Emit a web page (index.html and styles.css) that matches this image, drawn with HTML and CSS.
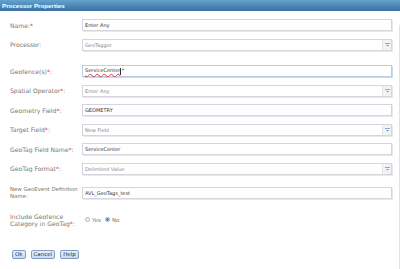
FILE: index.html
```html
<!DOCTYPE html>
<html lang="en">
<head>
    <meta charset="UTF-8">
    <title>Processor Properties</title>
    <link rel="stylesheet" href="styles.css">
</head>
<body>
    <div class="titlebar">Processor Properties</div>
    <div class="dialog-body">
        <div class="form">
            <div class="row">
                <div class="label">Name:<span class="req">*</span></div>
                <div class="box"><span class="value">Enter Any</span></div>
            </div>
            <div class="row">
                <div class="label">Processor:</div>
                <div class="box select">
                    <span class="value muted">GeoTagger</span>
                    <span class="arrow"><svg width="5" height="4" viewBox="0 0 5 4"><rect x="0" y="0" width="5" height="1" fill="#8aa6d6"/><path d="M1 2h3l-1.5 1.5z" fill="#6f8fd0"/></svg></span>
                </div>
            </div>
            <div class="row gap-top">
                <div class="label">Geofence(s)<span class="req">*</span>:</div>
                <div class="box focused"><span class="value"><span class="misspelled">ServiceCenter</span><span class="caret"></span><span class="star">*</span></span></div>
            </div>
            <div class="row">
                <div class="label">Spatial Operator<span class="req">*</span>:</div>
                <div class="box select">
                    <span class="value muted">Enter Any</span>
                    <span class="arrow"><svg width="5" height="4" viewBox="0 0 5 4"><rect x="0" y="0" width="5" height="1" fill="#8aa6d6"/><path d="M1 2h3l-1.5 1.5z" fill="#6f8fd0"/></svg></span>
                </div>
            </div>
            <div class="row">
                <div class="label">Geometry Field<span class="req">*</span>:</div>
                <div class="box"><span class="value">GEOMETRY</span></div>
            </div>
            <div class="row">
                <div class="label">Target Field<span class="req">*</span>:</div>
                <div class="box select">
                    <span class="value muted">New Field</span>
                    <span class="arrow"><svg width="5" height="4" viewBox="0 0 5 4"><rect x="0" y="0" width="5" height="1" fill="#8aa6d6"/><path d="M1 2h3l-1.5 1.5z" fill="#6f8fd0"/></svg></span>
                </div>
            </div>
            <div class="row">
                <div class="label">GeoTag Field Name<span class="req">*</span>:</div>
                <div class="box"><span class="value">ServiceCenter</span></div>
            </div>
            <div class="row">
                <div class="label">GeoTag Format<span class="req">*</span>:</div>
                <div class="box select">
                    <span class="value muted">Delimited Value</span>
                    <span class="arrow"><svg width="5" height="4" viewBox="0 0 5 4"><rect x="0" y="0" width="5" height="1" fill="#8aa6d6"/><path d="M1 2h3l-1.5 1.5z" fill="#6f8fd0"/></svg></span>
                </div>
            </div>
            <div class="row gap-top-sm">
                <div class="label nowrap">New GeoEvent Definition<br>Name:</div>
                <div class="box"><span class="value">AVL_GeoTags_test</span></div>
            </div>
            <div class="row tall">
                <div class="label">Include Geofence<br>Category in GeoTag<span class="req">*</span>:</div>
                <div class="radios">
                    <span class="radio"></span><span class="radio-text">Yes</span>
                    <span class="radio checked"></span><span class="radio-text">No</span>
                </div>
            </div>
            <div class="buttons">
                <button>Ok</button>
                <button>Cancel</button>
                <button>Help</button>
            </div>
        </div>
        <div class="scroll-edge"></div>
    </div>
</body>
</html>
```

FILE: styles.css
```css
body {
    margin: 0;
    background: #fff;
    font-family: "DejaVu Sans", Verdana, sans-serif;
    font-size: 6.1px;
    color: #777;
}

.titlebar {
    height: 11px;
    line-height: 11px;
    padding-left: 2px;
    font-family: "Liberation Sans", Arial, sans-serif;
    font-weight: bold;
    font-size: 6.2px;
    color: #fff;
    background: linear-gradient(#64a2cf, #3a70a2);
}

.dialog-body {
    display: flex;
}

.form {
    flex: 1;
    padding: 8px 7px 0 10px;
}

.scroll-edge {
    width: 1px;
    margin-top: 14px;
    height: 244px;
    background: #e2e2e6;
}

.row {
    display: flex;
    align-items: center;
    height: 12px;
    margin-bottom: 7.5px;
}

.row.gap-top {
    margin-top: 14.5px;
}

.row.gap-top-sm {
    margin-top: 12.5px;
}

.row.tall {
    height: 14px;
    margin-top: 13.5px;
}

.label {
    width: 72px;
    flex-shrink: 0;
    line-height: 7px;
}

.label.nowrap {
    white-space: nowrap;
    font-size: 5.4px;
}

.req {
    color: #e23a3a;
}

.box {
    flex: 1;
    height: 12px;
    box-sizing: border-box;
    display: flex;
    align-items: center;
    border: 1px solid #d5d5dd;
    box-shadow: 1px 1px 0 #e8e8ee;
    background: #fff;
    font-size: 5px;
}

.box.focused {
    border-color: #b6cde3;
    box-shadow: 1px 1px 0 #c9dbeb;
}

.value {
    flex: 1;
    padding-left: 2px;
    color: #333;
    white-space: nowrap;
}

.value.muted {
    color: #8a8a8a;
}

.misspelled {
    text-decoration: underline wavy #e03a3a;
    text-decoration-thickness: 0.5px;
}

.caret {
    display: inline-block;
    width: 1px;
    height: 7px;
    background: #333;
    vertical-align: middle;
}

.star {
    display: inline-block;
    vertical-align: top;
    margin-left: 0.5px;
}

.arrow {
    width: 8px;
    height: 100%;
    border-left: 1px solid #e4e4ea;
    background: #f3f3f6;
    display: flex;
    align-items: center;
    justify-content: center;
}

.radios {
    display: flex;
    align-items: center;
    padding-left: 3px;
    font-size: 5.5px;
}

.radio {
    width: 5px;
    height: 5px;
    box-sizing: border-box;
    border: 1px solid #b5b5bd;
    border-radius: 50%;
    background: #f4f4f6;
    margin-right: 2px;
}

.radio.checked {
    border-color: #8fa9cf;
    background: radial-gradient(circle, #5c8ed0 1.2px, #dfe8f4 1.5px);
}

.radio-text {
    margin-right: 4px;
}

.buttons {
    display: flex;
    gap: 5px;
    margin-top: 23px;
    padding-left: 2px;
}

button {
    font-family: "DejaVu Sans", Verdana, sans-serif;
    font-size: 5.5px;
    color: #333;
    height: 9px;
    line-height: 6px;
    padding: 0 2px;
    border: 1px solid #7f9cc6;
    border-radius: 2px;
    background: linear-gradient(#e8eff9, #c8d9ef);
}
```
